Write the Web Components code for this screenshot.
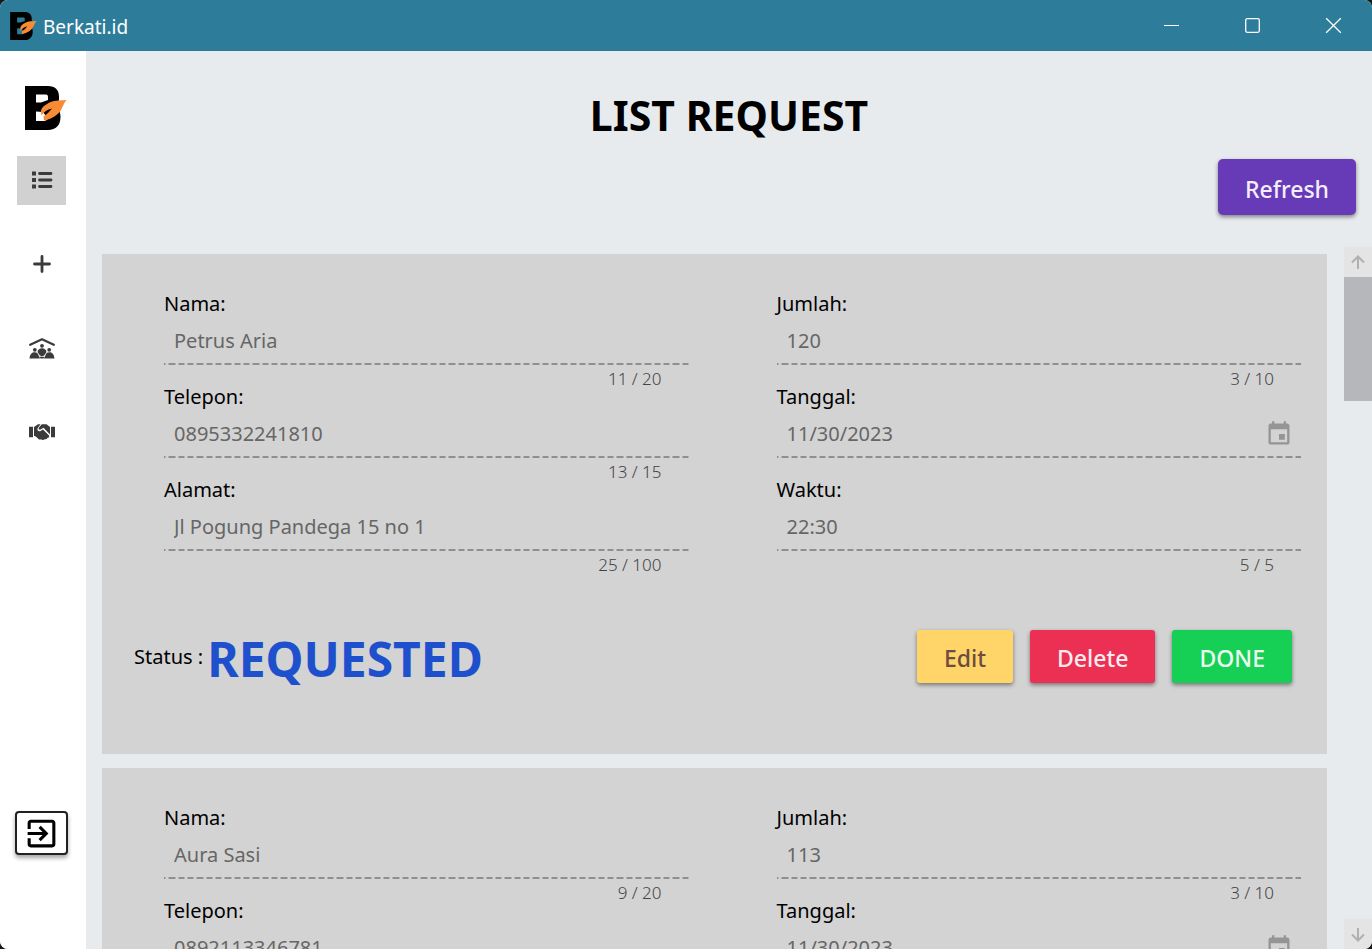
<!DOCTYPE html>
<html lang="id">
<head>
<meta charset="utf-8">
<meta name="viewport" content="width=device-width, initial-scale=1">
<title>Berkati.id</title>
<style>
  html, body { height: 100%; }
  body { margin: 0; background: #16181a; font-family: "Noto Sans", "Open Sans", sans-serif; font-size: 20px; color: #000; overflow: hidden; }
</style>
</head>
<body>
<berkati-window>
  <berkati-titlebar slot="title">Berkati.id</berkati-titlebar>
  <berkati-sidebar slot="side"></berkati-sidebar>
  <berkati-page heading="LIST REQUEST">
    <berkati-button slot="action" kind="refresh">Refresh</berkati-button>
    <request-card status="REQUESTED">
      <berkati-field label="Nama:" value="Petrus Aria" count="11 / 20"></berkati-field>
      <berkati-field label="Jumlah:" value="120" count="3 / 10"></berkati-field>
      <berkati-field label="Telepon:" value="0895332241810" count="13 / 15"></berkati-field>
      <berkati-field label="Tanggal:" value="11/30/2023" calendar></berkati-field>
      <berkati-field label="Alamat:" value="Jl Pogung Pandega 15 no 1" count="25 / 100"></berkati-field>
      <berkati-field label="Waktu:" value="22:30" count="5 / 5"></berkati-field>
    </request-card>
    <request-card>
      <berkati-field label="Nama:" value="Aura Sasi" count="9 / 20"></berkati-field>
      <berkati-field label="Jumlah:" value="113" count="3 / 10"></berkati-field>
      <berkati-field label="Telepon:" value="0892113346781"></berkati-field>
      <berkati-field label="Tanggal:" value="11/30/2023" calendar></berkati-field>
    </request-card>
  </berkati-page>
</berkati-window>

<script>
const define = (name, render) => customElements.define(name, class extends HTMLElement {
  connectedCallback() {
    if (this.shadowRoot) return;
    this.attachShadow({ mode: "open" }).innerHTML = render(this);
  }
});

define("berkati-window", () => `
  <style>
    :host { display: flex; flex-direction: column; height: 100vh; border-radius: 8px; overflow: hidden; background: #e7ebee; }
    .body { flex: 1; min-height: 0; display: flex; }
    ::slotted(berkati-page) { flex: 1; min-width: 0; }
  </style>
  <slot name="title"></slot>
  <div class="body"><slot name="side"></slot><slot></slot></div>`);

define("berkati-logo", () => `
  <style>
    :host { display: block; }
    svg { display: block; width: 100%; height: 100%; }
  </style>
  <svg viewBox="0 0 42 44" aria-hidden="true">
    <path fill="#000" fill-rule="evenodd" d="M0 0H23C30 0 34 4 34 10.500V14L32 22C34.500 24 35.500 27 35.500 31C35.500 39 31 44 23 44H0ZM11 8.500V16.500H16L23 14V11C23 9 22 8.500 20 8.500ZM11 25.500V35H20L23 33L18 26Z"/>
    <path fill="#f98b35" d="M41.500 14C36 14.500 30 14 25.500 16C20 19 16 21 16 26L16.500 29.500C19 26 22 23.500 27 22.500L23 27L18.500 30.500L19 34.500C27 33 33 29 36 24C38 20 39 17 41.500 14Z"/>
  </svg>`);

define("berkati-titlebar", () => `
  <style>
    :host { display: flex; align-items: center; height: 51px; background: #2d7d9a; color: #fff; }
    berkati-logo { width: 27px; height: 28px; margin: 0 6px 0 10px; }
    .name { flex: 1; font-size: 19px; line-height: 28px; padding-top: 2px; }
    .ctl { display: flex; gap: 4px; height: 100%; }
    button { width: 77px; border: 0; padding: 0; background: none; color: inherit; display: grid; place-items: center; }
    svg { width: 17px; height: 17px; display: block; }
  </style>
  <berkati-logo></berkati-logo>
  <div class="name"><slot></slot></div>
  <div class="ctl">
    <button aria-label="Minimize"><svg viewBox="0 0 17 17"><path d="M1 8.500H16" stroke="#fff"/></svg></button>
    <button aria-label="Maximize"><svg viewBox="0 0 17 17"><rect x="1.700" y="1.700" width="13.600" height="13.600" rx="1.500" fill="none" stroke="#fff" stroke-width="1.300"/></svg></button>
    <button aria-label="Close"><svg viewBox="0 0 17 17"><path d="M1.200 1.200L15.800 15.800M15.800 1.200L1.200 15.800" stroke="#fff" stroke-width="1.300"/></svg></button>
  </div>`);

define("berkati-sidebar", () => `
  <style>
    :host { display: flex; flex-direction: column; align-items: center; width: 86px; box-sizing: border-box; padding: 35px 3px 94px 0; background: #fff; }
    berkati-logo { width: 42px; height: 44px; margin: 0 0 26px 8px; }
    nav { display: flex; flex-direction: column; gap: 35px; }
    nav a { display: grid; place-items: center; box-sizing: border-box; width: 49px; height: 49px; padding-bottom: 1px; color: #3b3b3b; }
    nav a[aria-current] { background: #d1d1d1; }
    svg { display: block; width: 26px; height: 26px; }
    button { margin-top: auto; width: 53px; height: 44px; padding: 0; display: grid; place-items: center; background: #fff; border: 2px solid #212121; border-radius: 4px; box-shadow: 0 3px 4px rgba(0,0,0,.35); }
    button svg { width: 37px; height: 37px; }
  </style>
  <berkati-logo></berkati-logo>
  <nav>
    <a href="#list" aria-current="page" aria-label="List request"><svg viewBox="0 0 26 26" fill="currentColor"><path d="M3 4.500h4v4H3zM3 11h4v4H3zM3 17.500h4v4H3z"/><path d="M10.500 6.500h11.500M10.500 13h11.500M10.500 19.500h11.500" stroke="currentColor" stroke-width="2.800" stroke-linecap="round"/></svg></a>
    <a href="#add" aria-label="Add request"><svg viewBox="0 0 26 26" fill="none" stroke="currentColor" stroke-width="2.800" stroke-linecap="round"><path d="M13 5.500v15M5.500 13h15"/></svg></a>
    <a href="#shelter" aria-label="Shelter"><svg viewBox="0 0 26 26" fill="currentColor">
      <path d="M1.200 9.800L13 4.300L24.800 9.800" fill="none" stroke="currentColor" stroke-width="2.300" stroke-linecap="round" stroke-linejoin="round"/>
      <circle cx="13" cy="10.800" r="1.900"/><circle cx="5.800" cy="14.800" r="1.900"/><circle cx="20.200" cy="14.800" r="1.900"/>
      <path d="M8.500 17C9 14.500 10.500 13.300 13 13.300S17 14.500 17.500 17L15.500 20C14.500 21.500 11.500 21.500 10.500 20Z"/>
      <path d="M.5 23.500C1 19 3 17.300 5.800 17.300C7.500 17.300 8.500 18 9.200 19.500L11 23.500ZM25.500 23.500C25 19 23 17.300 20.200 17.300C18.500 17.300 17.500 18 16.800 19.500L15 23.500ZM10.500 21.800H15.500L14.500 23.500H11.500Z"/>
    </svg></a>
    <a href="#partners" aria-label="Partners"><svg viewBox="0 0 26 26" fill="currentColor">
      <path d="M0 7.800h4v10.400H0zM22 7.800h4v10.400h-4z"/>
      <path d="M5 8L9 5.200H11.500L8.500 9.500C8 12 10 13 12 11.800L14 10.500L20 16.500C20.500 18 19.500 19 18.500 18.800C18.300 20 17 20.500 16 20C15 21.200 13 21.200 12 20.300C10.500 21 9 20 8.500 19L6 17H5Z"/>
      <path d="M21 8L17.500 5.200H12.800L9.800 8.800C9.300 10.300 10.200 11.200 11.500 10.600L14.500 8.800L21 15.500Z"/>
    </svg></a>
  </nav>
  <button aria-label="Exit"><svg viewBox="0 0 24 24"><path d="M10.090 15.590L11.500 17l5-5-5-5-1.410 1.410L12.670 11H3v2h9.670zM19 3H5c-1.110 0-2 .9-2 2v4h2V5h14v14H5v-4H3v4c0 1.100.89 2 2 2h14c1.100 0 2-.9 2-2V5c0-1.100-.9-2-2-2z"/></svg></button>`);

define("berkati-page", el => `
  <style>
    :host { display: flex; flex-direction: column; }
    header { display: flex; flex-direction: column; padding: 36px 16px 32px; }
    h1 { margin: 0 0 16px; font-size: 41px; line-height: 56px; font-weight: 700; text-align: center; }
    .action { align-self: flex-end; }
    .scroll { flex: 1; min-height: 0; display: flex; }
    .list { flex: 1; min-width: 0; overflow: hidden; padding: 7px 17px 0 16px; display: flex; flex-direction: column; gap: 14px; }
  </style>
  <header>
    <h1>${el.getAttribute("heading")}</h1>
    <div class="action"><slot name="action"></slot></div>
  </header>
  <div class="scroll">
    <main class="list"><slot></slot></main>
    <berkati-scrollbar></berkati-scrollbar>
  </div>`);

define("berkati-scrollbar", () => `
  <style>
    :host { display: flex; flex-direction: column; width: 28px; }
    button { height: 30px; padding: 0; border: 0; background: #e4e4e4; display: grid; place-items: center; }
    svg { display: block; width: 16px; height: 16px; fill: none; stroke: #b0b0b0; stroke-width: 2; }
    .track { flex: 1; }
    .thumb { height: 124px; background: #b6b7bb; }
  </style>
  <button aria-label="Scroll up"><svg viewBox="0 0 16 16"><path d="M8 15V3M2 8.500L8 2.500L14 8.500"/></svg></button>
  <div class="track"><div class="thumb"></div></div>
  <button aria-label="Scroll down"><svg viewBox="0 0 16 16"><path d="M8 2V14M2 8.500L8 14.500L14 8.500"/></svg></button>`);

define("berkati-button", () => `
  <style>
    :host { display: block; --bg: #673ab7; --fg: #f3eefa; }
    :host([kind="edit"]) { --bg: #ffd56a; --fg: #6d4c41; }
    :host([kind="delete"]) { --bg: #eb3054; --fg: #fdebee; }
    :host([kind="done"]) { --bg: #16cf55; --fg: #ebfcf1; }
    button { display: block; height: 53px; padding: 3px 27px 0; border: 0; border-radius: 3px; background: var(--bg); color: var(--fg); font: 500 23px/48px "Noto Sans", "Open Sans", sans-serif; box-shadow: 0 2px 4px rgba(0,0,0,.45); }
    :host([kind="refresh"]) button { height: 56px; border-radius: 5px; }
  </style>
  <button><slot></slot></button>`);

define("request-card", el => {
  const status = el.getAttribute("status");
  return `
  <style>
    :host { display: block; flex: none; min-height: 500px; box-sizing: border-box; padding-top: 36px; background: #d3d3d3; }
    .fields { display: grid; grid-template-columns: 1fr 1fr; }
    ::slotted(berkati-field) { margin: 0 26px 0 62px; }
    footer { display: flex; align-items: center; gap: 17px; height: 53px; padding: 61px 35px 71px 32px; }
    .status { flex: 1; display: flex; align-items: center; gap: 4px; }
    strong { font-size: 48px; line-height: 60px; padding-top: 4px; color: #1e50cd; }
  </style>
  <div class="fields"><slot></slot></div>
  ${status ? `<footer>
    <div class="status"><span>Status :</span><strong>${status}</strong></div>
    <berkati-button kind="edit">Edit</berkati-button>
    <berkati-button kind="delete">Delete</berkati-button>
    <berkati-button kind="done">DONE</berkati-button>
  </footer>` : ""}`;
});

define("berkati-field", el => `
  <style>
    :host { display: block; }
    label { display: block; line-height: 28px; }
    .line { display: flex; align-items: center; height: 45px; padding: 0 8px 2px 10px;
      background: linear-gradient(to right, transparent 3px, #8f8f8f 3px 9px, transparent 9px 12px, #8f8f8f 12px 19px, transparent 19px 22px, #8f8f8f 22px) right bottom / 28px 2px repeat-x; }
    input { flex: 1; min-width: 0; height: 40px; padding: 0; border: 0; outline: 0; background: none; font: inherit; color: #666; }
    button { padding: 0; border: 0; background: none; }
    svg { display: block; width: 28px; height: 28px; fill: #959595; }
    .count { height: 18px; line-height: 28px; font-size: 17px; font-weight: 300; color: #444; text-align: right; padding-right: 27px; }
  </style>
  <label for="v">${el.getAttribute("label")}</label>
  <div class="line">
    <input id="v" type="text" readonly value="${el.getAttribute("value")}">
    ${el.hasAttribute("calendar") ? `<button aria-label="Open calendar"><svg viewBox="0 0 24 24"><path d="M17 12h-5v5h5v-5zM16 1v2H8V1H6v2H5c-1.110 0-1.990.9-1.990 2L3 19c0 1.100.89 2 2 2h14c1.100 0 2-.9 2-2V5c0-1.100-.9-2-2-2h-1V1h-2zm3 18H5V8h14v11z"/></svg></button>` : ""}
  </div>
  <div class="count">${el.getAttribute("count") || ""}</div>`);
</script>
</body>
</html>
